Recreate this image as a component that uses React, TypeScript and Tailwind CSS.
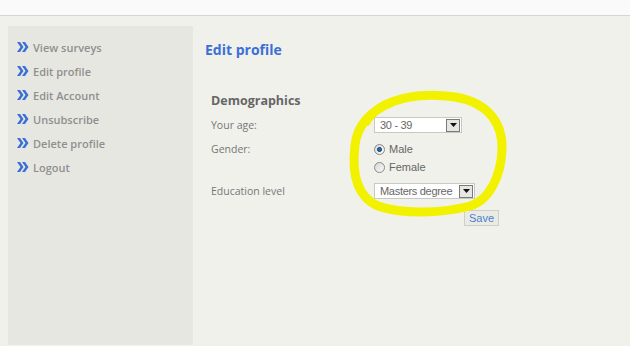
import React from "react";

const navItems = ["View surveys", "Edit profile", "Edit Account", "Unsubscribe", "Delete profile", "Logout"];

function Chevrons() {
  return (
    <svg width="12" height="10" viewBox="0 0 12 10" className="shrink-0">
      <path d="M0 0 H3 L6.5 5 L3 10 H0 L3.5 5 Z" fill="#3c6fd6" />
      <path d="M5 0 H8 L11.5 5 L8 10 H5 L8.5 5 Z" fill="#3c6fd6" />
    </svg>
  );
}

function Select({ value, width }: { value: string; width: string }) {
  return (
    <div className={`${width} h-[16px] bg-white border border-[#c9c9c4] flex items-center justify-between pl-[5px] pr-[1px]`}>
      <span className="text-[11px] tracking-[-0.3px] text-[#666] leading-none" style={{ fontFamily: '"Liberation Sans", Arial, sans-serif' }}>{value}</span>
      <div className="w-[14px] h-[13px] bg-[#e6e6e2] border border-[#7a7a7a] flex items-center justify-center">
        <svg width="7" height="4" viewBox="0 0 7 4"><path d="M0 0 H7 L3.5 4 Z" fill="#111" /></svg>
      </div>
    </div>
  );
}

function Radio({ checked, label }: { checked?: boolean; label: string }) {
  return (
    <div className="flex items-center gap-[4px] h-[18px]">
      <div className="w-[11px] h-[11px] rounded-full border border-[#8a8a8a] bg-gradient-to-br from-[#d6d6d6] to-[#fafafa] flex items-center justify-center">
        {checked && <div className="w-[5px] h-[5px] rounded-full bg-[#1f6fb3] border border-[#0c3a66]" />}
      </div>
      <span className="text-[11px] text-[#666]" style={{ fontFamily: '"Liberation Sans", Arial, sans-serif' }}>{label}</span>
    </div>
  );
}

export default function App() {
  return (
    <div className="w-[630px] h-[346px] bg-[#f1f1ec] relative overflow-hidden" style={{ fontFamily: '"Open Sans", sans-serif' }}>
      <div className="h-[16px] bg-[#fafafa] border-b border-[#d6d6d0]" />
      <div className="flex pt-[10px] pl-[8px] h-[329px]">
        <aside className="w-[185px] bg-[#e7e7e2] pt-[9px] pl-[9px]">
          {navItems.map((n) => (
            <div key={n} className="h-[24px] flex items-center gap-[4px]">
              <Chevrons />
              <span className="text-[11px] font-semibold text-[#8f8f8f] leading-none">{n}</span>
            </div>
          ))}
        </aside>
        <main className="pl-[12px] pt-[15px] flex-1">
          <h1 className="text-[14px] font-bold text-[#3c6fd6] leading-[18px]">Edit profile</h1>
          <div className="pl-[6px] mt-[34px]">
            <h2 className="text-[12.5px] font-bold text-[#666] leading-[16px]">Demographics</h2>
            <div className="grid grid-cols-[163px_auto] mt-[8px] text-[10.5px] text-[#777]">
              <div className="leading-[16px]">Your age:</div>
              <div><Select value="30 - 39" width="w-[88px]" /></div>
              <div className="mt-[8px] leading-[16px]">Gender:</div>
              <div className="mt-[7px] flex flex-col">
                <Radio checked label="Male" />
                <Radio label="Female" />
              </div>
              <div className="mt-[7px] leading-[16px]">Education level</div>
              <div className="mt-[7px]"><Select value="Masters degree" width="w-[101px]" /></div>
              <div />
              <div className="mt-[11px] flex pl-[90px]">
                <button className="h-[16px] px-[4px] bg-[#ebebe6] border border-[#cfcfca] text-[11px] text-[#4d7ed0] leading-none" style={{ fontFamily: '"Liberation Sans", Arial, sans-serif' }}>Save</button>
              </div>
            </div>
          </div>
        </main>
      </div>
      <svg className="absolute left-0 top-0 pointer-events-none" width="630" height="346">
        <path
          d="M366 122 C380 98, 420 92, 455 97 C490 103, 503 125, 502 150 C501 175, 490 200, 470 206 C440 214, 400 214, 378 206 C355 196, 352 170, 355 145 C357 128, 368 112, 392 102"
          fill="none"
          stroke="#f2f200"
          strokeWidth="9"
          strokeLinecap="round"
        />
      </svg>
    </div>
  );
}
